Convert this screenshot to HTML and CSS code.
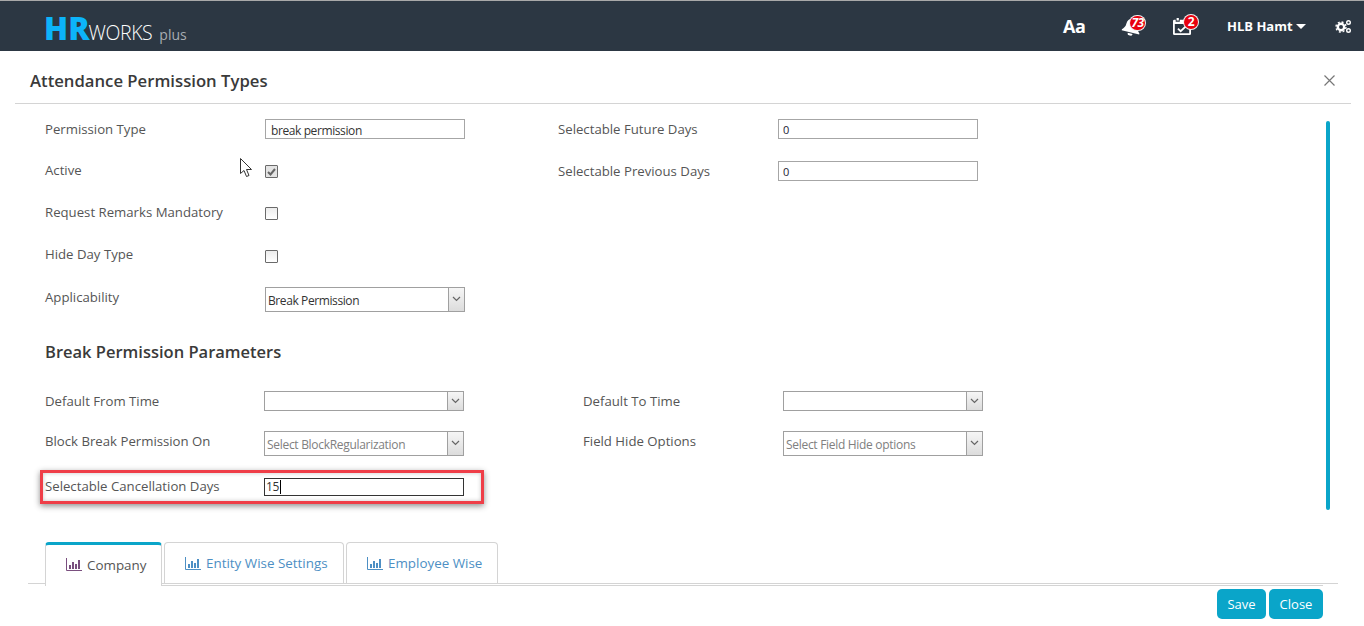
FILE: index.html
```html
<!DOCTYPE html>
<html lang="en">
<head>
    <meta charset="UTF-8">
    <title>Attendance Permission Types</title>
    <link rel="stylesheet" href="styles.css">
</head>
<body>

<header class="topbar">
    <div class="logo"><b>HR</b><span class="logo-works">WORKS</span><span class="logo-plus">plus</span></div>
    <div class="top-actions">
        <span class="font-btn">Aa</span>
        <span class="top-icon bell">
            <svg width="24" height="20" viewBox="0 0 22 20"><path fill="#fff" d="M11 1.5c-1 0-1.600.7-1.600 1.500C6.600 3.700 5 6 5 9c0 3.500-1.300 4.800-3 6.500V16.500h18v-1c-1.700-1.700-3-3-3-6.500 0-3-1.600-5.300-4.400-6C12.600 2.200 12 1.500 11 1.500zM8.500 17.500a2.500 2.500 0 0 0 5 0z"/></svg>
            <span class="badge">73</span>
        </span>
        <span class="top-icon cal">
            <svg width="18" height="17" viewBox="0 0 20 20" preserveAspectRatio="none"><path fill="#fff" d="M4 0h2.500v3H4zM13.500 0H16v3h-2.500zM1.500 2H3v2.500h4.500V2h5v2.500H17V2h1.500A1.500 1.500 0 0 1 20 3.500v15a1.500 1.500 0 0 1-1.500 1.500h-17A1.500 1.500 0 0 1 0 18.500v-15A1.500 1.500 0 0 1 1.500 2zM2 7v11h16V7z"/><path fill="none" stroke="#fff" stroke-width="2" d="M5.500 12.500l3 3 6-6"/></svg>
            <span class="badge">2</span>
        </span>
        <span class="user">HLB Hamt<i class="caret"></i></span>
        <svg class="gears" width="17" height="15" viewBox="0 0 17 15">
            <g fill="none" stroke="#fff">
                <circle cx="6" cy="8" r="3.200" stroke-width="2.400"/>
                <circle cx="6" cy="8" r="5" stroke-width="1.400" stroke-dasharray="2 1.930"/>
                <circle cx="13.500" cy="3.500" r="1.800" stroke-width="1.400"/>
                <circle cx="13.500" cy="11.500" r="1.800" stroke-width="1.400"/>
            </g>
        </svg>
    </div>
</header>

<main class="panel">
    <div class="panel-head">
        <h1>Attendance Permission Types</h1>
        <svg class="close-x" width="11" height="11" viewBox="0 0 11 11"><path stroke="#777" stroke-width="1.200" d="M.5.500l10 10M10.500.500l-10 10"/></svg>
    </div>

    <svg class="cursor" width="13" height="20" viewBox="0 0 13 20"><path fill="#fff" stroke="#333" d="M.5.500v15l3.500-3 2.500 6 2.500-1-2.500-6h5z"/></svg>
    <div class="scroll-thumb"></div>

    <form class="form-body">
        <div class="grid-top">
            <label class="down">Permission Type</label>
            <input class="field" type="text" value="break permission">
            <span></span>
            <label class="down">Selectable Future Days</label>
            <input class="field num" type="text" value="0">

            <label>Active</label>
            <div><span class="check on"><svg width="9" height="8" viewBox="0 0 9 8"><path fill="none" stroke="#666" stroke-width="2" d="M1 4l2.500 2.500L8 1"/></svg></span></div>
            <span></span>
            <label class="down">Selectable Previous Days</label>
            <input class="field num" type="text" value="0">

            <label>Request Remarks Mandatory</label>
            <div><span class="check"></span></div>
            <span></span><span></span><span></span>

            <label>Hide Day Type</label>
            <div><span class="check low"></span></div>
            <span></span><span></span><span></span>

            <label class="down">Applicability</label>
            <div class="drop tall"><span class="drop-text dark">Break Permission</span><span class="drop-arrow"><svg width="9" height="6" viewBox="0 0 9 6"><path fill="none" stroke="#666" stroke-width="1.200" d="M1 1l3.500 3.500L8 1"/></svg></span></div>
        </div>

        <h2>Break Permission Parameters</h2>

        <div class="grid-params">
            <label>Default From Time</label>
            <div class="drop"><span class="drop-text"></span><span class="drop-arrow"><svg width="9" height="6" viewBox="0 0 9 6"><path fill="none" stroke="#666" stroke-width="1.200" d="M1 1l3.500 3.500L8 1"/></svg></span></div>
            <span></span>
            <label>Default To Time</label>
            <div class="drop"><span class="drop-text"></span><span class="drop-arrow"><svg width="9" height="6" viewBox="0 0 9 6"><path fill="none" stroke="#666" stroke-width="1.200" d="M1 1l3.500 3.500L8 1"/></svg></span></div>

            <label class="up">Block Break Permission On</label>
            <div class="drop tall"><span class="drop-text">Select BlockRegularization</span><span class="drop-arrow"><svg width="9" height="6" viewBox="0 0 9 6"><path fill="none" stroke="#666" stroke-width="1.200" d="M1 1l3.500 3.500L8 1"/></svg></span></div>
            <span></span>
            <label class="up">Field Hide Options</label>
            <div class="drop tall"><span class="drop-text">Select Field Hide options</span><span class="drop-arrow"><svg width="9" height="6" viewBox="0 0 9 6"><path fill="none" stroke="#666" stroke-width="1.200" d="M1 1l3.500 3.500L8 1"/></svg></span></div>
        </div>

        <div class="highlight">
            <label>Selectable Cancellation Days</label>
            <div class="field focus">15<i class="caret-line"></i></div>
        </div>
    </form>

    <div class="tabs-wrap">
        <nav class="tabs">
            <a class="tab active"><svg class="bars" width="16" height="13" viewBox="0 0 16 13"><path fill="none" stroke="currentColor" d="M.5 0v12.500H16"/><path fill="currentColor" d="M3 7h2v4H3zM6 4h2v7H6zM9 6h2v5H9zM12 2h2v9h-2z"/></svg>Company</a>
            <a class="tab"><svg class="bars" width="16" height="13" viewBox="0 0 16 13"><path fill="none" stroke="currentColor" d="M.5 0v12.500H16"/><path fill="currentColor" d="M3 7h2v4H3zM6 4h2v7H6zM9 6h2v5H9zM12 2h2v9h-2z"/></svg>Entity Wise Settings</a>
            <a class="tab"><svg class="bars" width="16" height="13" viewBox="0 0 16 13"><path fill="none" stroke="currentColor" d="M.5 0v12.500H16"/><path fill="currentColor" d="M3 7h2v4H3zM6 4h2v7H6zM9 6h2v5H9zM12 2h2v9h-2z"/></svg>Employee Wise</a>
        </nav>
    </div>

    <div class="footer-btns">
        <button type="button" class="btn save">Save</button>
        <button type="button" class="btn close">Close</button>
    </div>
</main>

</body>
</html>
```

FILE: styles.css
```css
* {
    box-sizing: border-box;
}
html, body {
    height: 100%;
    overflow: hidden;
}
body {
    margin: 0;
    background: #fff;
    font-family: "Open Sans", Arial, sans-serif;
    font-size: 13.2px;
    color: #555;
}

/* top bar */
.topbar {
    height: 51px;
    background: #2c3743;
    border-top: 1px solid #a9a9a9;
    display: flex;
    align-items: center;
    justify-content: space-between;
    padding-left: 44px;
}
.logo {
    display: flex;
    align-items: baseline;
    color: #fff;
    margin-top: 4px;
}
.logo b {
    font-size: 31.5px;
    font-weight: 800;
    color: #0cb4fa;
    line-height: 36px;
    margin-right: -1px;
}
.logo-works {
    font-size: 19.5px;
    font-weight: 300;
    letter-spacing: -.4px;
}
.logo-plus {
    font-size: 14px;
    color: #a8adb2;
    margin-left: 7px;
}
.top-actions {
    display: flex;
    align-items: center;
    color: #fff;
    font-weight: 700;
    margin-right: 12px;
}
.font-btn {
    font-size: 18px;
    width: 22px;
    margin-right: 38px;
    letter-spacing: -.5px;
}
.top-icon {
    position: relative;
    display: flex;
    width: 26px;
    margin-right: 26px;
}
.bell svg {
    margin-left: -3px;
    transform: rotate(14deg);
}
.cal svg {
    margin-left: -2px;
}
.badge {
    position: absolute;
    top: 0;
    right: 4px;
    min-width: 15px;
    height: 14px;
    padding: 0 1px;
    border-radius: 7px;
    background: #e8000f;
    box-shadow: 0 0 0 1px #f0f0f0;
    color: #fff;
    font-size: 12px;
    line-height: 14px;
    text-align: center;
    letter-spacing: -.5px;
}
.bell .badge {
    font-style: italic;
}
.cal .badge {
    top: -3px;
    right: 3px;
    min-width: 14px;
}
.user {
    font-size: 13px;
    display: flex;
    align-items: center;
    width: 108px;
}
.caret {
    margin-left: 3px;
    border-top: 5px solid #fff;
    border-left: 5px solid transparent;
    border-right: 5px solid transparent;
}

/* panel */
.panel {
    position: relative;
    height: 575px;
}
.panel-head {
    height: 53px;
    margin: 0 13px 0 15px;
    border-bottom: 1px solid #d4d4d4;
    display: flex;
    align-items: center;
    justify-content: space-between;
    padding: 6px 16px 0 15px;
}
h1 {
    margin: 0;
    font-size: 16.7px;
    font-weight: 600;
    color: #3a3a3a;
}
.cursor {
    position: absolute;
    left: 240px;
    top: 107px;
}
.scroll-thumb {
    position: absolute;
    left: 1326px;
    top: 70px;
    width: 4px;
    height: 389px;
    border-radius: 2px;
    background: #0aa5c9;
}

/* form */
.form-body {
    padding: 4px 0 0 45px;
}
.grid-top {
    display: grid;
    grid-template-columns: 220px 200px 93px 220px 200px;
    grid-auto-rows: 42px;
    align-items: center;
}
.form-body label {
    display: block;
    white-space: nowrap;
}
.grid-top label {
    margin-top: -3px;
}
.grid-top label.down {
    margin-top: 0;
}
.field {
    display: block;
    width: 200px;
    height: 20px;
    border: 1px solid #a6a6a6;
    padding: 2px 5px 0;
    font-family: inherit;
    font-size: 12px;
    letter-spacing: -.4px;
    color: #333;
    background: #fff;
    outline: none;
}
.field.num {
    padding: 0 0 0 4px;
    font-size: 11px;
    color: #223;
}
.check {
    display: flex;
    width: 13px;
    height: 13px;
    border: 1px solid #6a6a6a;
    border-radius: 1px;
    background: linear-gradient(#ececec, #fff);
    align-items: center;
    justify-content: center;
    margin-top: 1px;
}
.check.low {
    margin-top: 2px;
}
.check.on {
    background: #e4e4e4;
}
.drop {
    display: flex;
    width: 200px;
    height: 20px;
    border: 1px solid #a0a0a0;
    background: #fff;
    font-size: 12px;
    letter-spacing: -.3px;
    line-height: 16px;
}
.drop.tall {
    height: 25px;
}
.drop-text {
    flex: 1;
    padding-left: 2px;
    align-self: center;
    margin-top: 3px;
    color: #808080;
    white-space: nowrap;
}
.drop-text.dark {
    color: #333;
    letter-spacing: -.4px;
}
.drop-arrow {
    width: 16px;
    border-left: 1px solid #a0a0a0;
    background: linear-gradient(#f6f6f6, #dcdcdc);
    display: flex;
    align-items: center;
    justify-content: center;
}
.grid-top .drop {
    margin-top: 4px;
}
h2 {
    margin: 23px 0 0;
    font-size: 16.5px;
    line-height: 22px;
    font-weight: 600;
    color: #3a3a3a;
}
.grid-params {
    display: grid;
    grid-template-columns: 219px 200px 119px 200px 200px;
    grid-template-rows: 40px 44px;
    align-items: center;
    margin-top: 18px;
}
.grid-params label.up {
    margin-top: -5px;
}
.highlight {
    display: flex;
    align-items: center;
    width: 444px;
    height: 34px;
    margin: 5px 0 0 -5px;
    padding-left: 2px;
    border: 3px solid #ef3e48;
    box-shadow: 0 2px 6px rgba(0, 0, 0, .45), inset 0 0 4px rgba(0, 0, 0, .22);
}
.highlight label {
    width: 219px;
    margin-top: -3px;
}
.field.focus {
    height: 18px;
    line-height: 15px;
    padding: 0 0 0 1px;
    border-color: #333;
    color: #333;
}
.caret-line {
    display: inline-block;
    width: 1px;
    height: 14px;
    background: #000;
    margin-left: 1px;
    vertical-align: -3px;
}

/* tabs */
.tabs-wrap {
    margin: 38px 26px 0 28px;
    border-bottom: 1px solid #d4d4d4;
    padding-left: 17px;
    height: 42px;
}
.tabs {
    display: flex;
}
.tab {
    height: 41px;
    display: flex;
    align-items: center;
    margin-right: 2px;
    padding: 0 10px 0 20px;
    border: 1px solid #d4d4d4;
    border-bottom: 0;
    border-radius: 4px 4px 0 0;
    color: #4d8fc4;
    font-size: 13.4px;
    white-space: nowrap;
}
.tab:nth-child(1) {
    width: 117px;
    height: 44px;
    border-top: 3px solid #0aa5c9;
    padding-bottom: 2px;
    color: #555;
    background: #fff;
    position: relative;
}
.tab:nth-child(2) {
    width: 180px;
}
.tab:nth-child(3) {
    width: 152px;
}
.bars {
    margin-right: 5px;
}
.tab.active .bars {
    color: #7a4f7f;
}

/* buttons */
.footer-btns {
    display: flex;
    justify-content: flex-end;
    gap: 3px;
    margin: 0 41px 0 162px;
    border-top: 1px solid #d4d4d4;
    position: relative;
    top: 1px;
}
.btn {
    height: 30px;
    margin-top: 3px;
    border: none;
    border-radius: 5px;
    background: #0aa5c9;
    color: #fff;
    font-family: inherit;
    font-size: 13px;
    padding: 0;
}
.save {
    width: 49px;
}
.close {
    width: 54px;
}
```
